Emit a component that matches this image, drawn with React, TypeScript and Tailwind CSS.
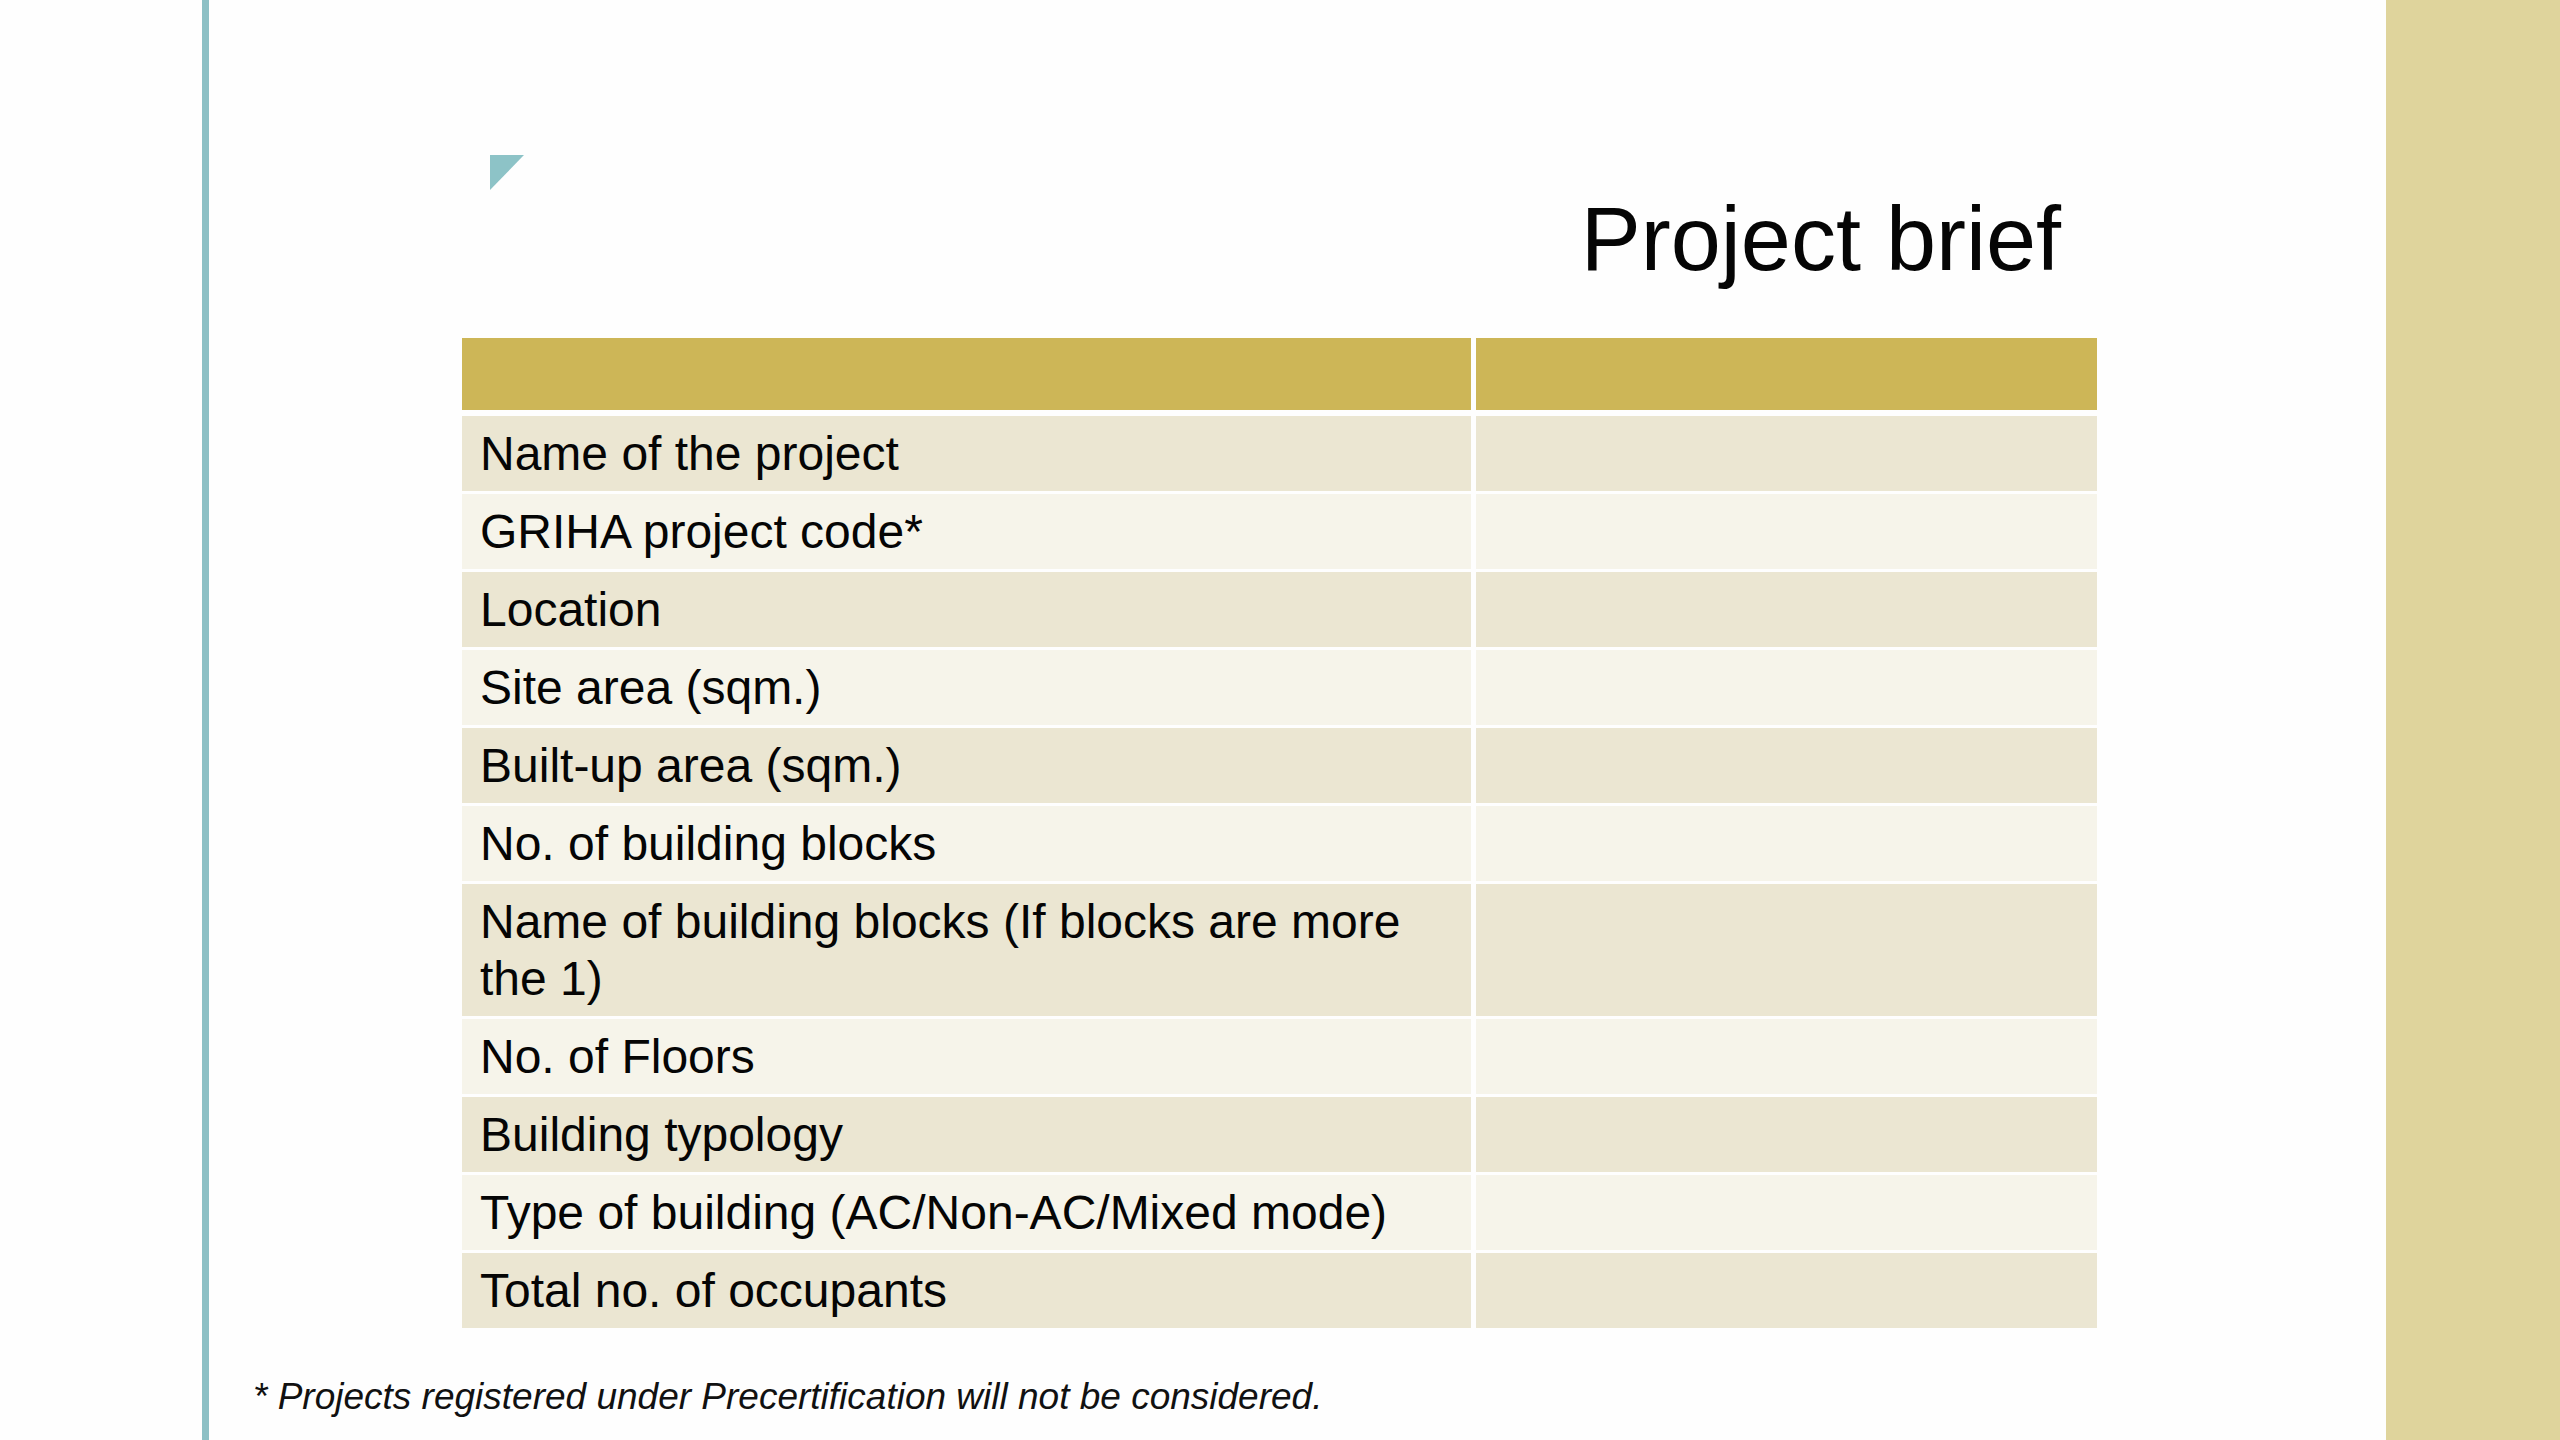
const rows: { label: React.ReactNode; tall?: boolean }[] = [
  { label: "Name of the project" },
  { label: "GRIHA project code*" },
  { label: "Location" },
  { label: "Site area (sqm.)" },
  { label: "Built-up area (sqm.)" },
  { label: "No. of building blocks" },
  {
    label: (
      <>
        Name of building blocks (If blocks are more
        <br />
        the 1)
      </>
    ),
    tall: true,
  },
  { label: "No. of Floors" },
  { label: "Building typology" },
  { label: "Type of building (AC/Non-AC/Mixed mode)" },
  { label: "Total no. of occupants" },
];

export default function App() {
  return (
    <div className="flex h-[1440px] w-[2560px] overflow-hidden bg-[#fefefe] font-['Liberation_Sans',Arial,sans-serif] text-[#050505]">
      <div className="w-[202px] shrink-0" />
      <div className="w-[7px] shrink-0 bg-[#8dc0c5]" />

      <main className="flex w-[2177px] shrink-0 flex-col">
        {/* corner mark */}
        <div className="ml-[281px] mt-[155px] h-[35px] w-[34px]">
          <svg width="34" height="35" viewBox="0 0 34 35">
            <polygon points="0,0 34,0 0,35" fill="#8dc3c7" />
          </svg>
        </div>

        <div className="ml-[253px] mt-[4px] w-[1635px] pr-[36px] text-right">
          <h1 className="text-[90px] leading-[90px] font-normal">
            Project brief
          </h1>
        </div>

        <div className="ml-[253px] mt-[54px] flex w-[1635px] flex-col">
          <div className="grid h-[72px] grid-cols-[1009px_621px] gap-x-[5px]">
            <div className="bg-[#cdb657]" />
            <div className="bg-[#cdb657]" />
          </div>

          <div className="mt-[6px] flex flex-col gap-[3px]">
            {rows.map((row, i) => {
              const bg = i % 2 === 0 ? "bg-[#ebe6d2]" : "bg-[#f6f4ea]";
              return (
                <div
                  key={i}
                  className="grid grid-cols-[1009px_621px] gap-x-[5px]"
                >
                  <div
                    className={`${bg} py-[9px] pl-[18px] pr-[10px] text-[48px] leading-[57px]`}
                  >
                    {row.label}
                  </div>
                  <div className={bg} />
                </div>
              );
            })}
          </div>
        </div>

        <p className="ml-[44px] mt-[47px] text-[37px] leading-[44px] italic text-[#111]">
          * Projects registered under Precertification will not be considered.
        </p>
      </main>

      <div className="w-[174px] shrink-0 bg-[#dfd49c]" />
    </div>
  );
}
